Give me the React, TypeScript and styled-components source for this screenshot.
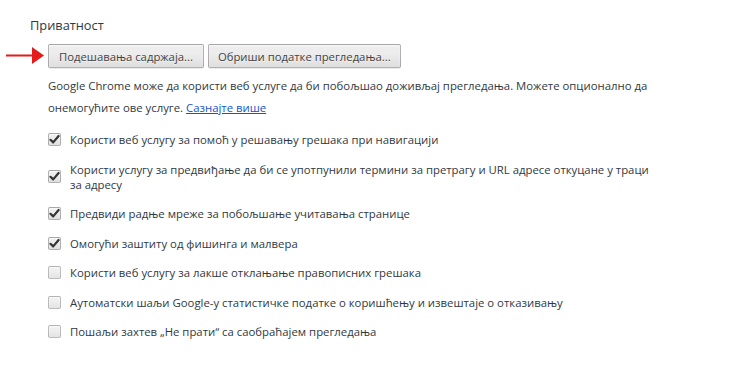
import React from "react";
import styled, { createGlobalStyle } from "styled-components";

const Global = createGlobalStyle`
  html, body { margin: 0; padding: 0; background: #fff; }
  body { font-family: "Open Sans", "Noto Sans", sans-serif; color: #303942; }
`;

const Page = styled.div`
  position: relative;
  width: 744px;
  height: 375px;
  padding: 17px 0 0 30px;
  box-sizing: border-box;
`;

const Title = styled.h3`
  margin: 0;
  font-size: 12.8px;
  font-weight: 400;
  line-height: 16px;
  color: #303942;
`;

const Section = styled.div`
  padding-left: 18px;
  margin-top: 11px;
`;

const ButtonRow = styled.div`
  position: relative;
  display: flex;
  gap: 4px;
`;

const Button = styled.button`
  height: 24px;
  padding: 0 10px;
  font-family: inherit;
  font-size: 11.3px;
  color: #444;
  background: linear-gradient(#ededed, #ededed 38%, #dedede);
  border: 1px solid rgba(0, 0, 0, 0.25);
  border-radius: 2px;
  box-shadow: 0 1px 0 rgba(0, 0, 0, 0.08), inset 0 1px 2px rgba(255, 255, 255, 0.75);
  text-shadow: 0 1px 0 #f0f0f0;

  & + & {
    padding: 0 9px;
  }
`;

const Arrow = styled.svg`
  position: absolute;
  left: -42px;
  top: 3px;
`;

const Description = styled.p`
  margin: 7px 0 0;
  font-size: 11.35px;
  line-height: 21.5px;
  white-space: nowrap;
`;

const Link = styled.a`
  color: #15c;
  text-decoration: underline;
`;

const List = styled.div`
  margin-top: 14px;
  display: flex;
  flex-direction: column;
  gap: 14.5px;
`;

const Row = styled.label`
  display: flex;
  align-items: center;
  gap: 9px;
  font-size: 11.35px;
  line-height: 15px;
`;

const Box = styled.span<{ $checked: boolean }>`
  flex: none;
  width: 13px;
  height: 13px;
  box-sizing: border-box;
  border: 1px solid rgba(0, 0, 0, 0.25);
  border-radius: 2px;
  background: linear-gradient(#ededed, #ededed 38%, #dedede);
  box-shadow: inset 0 1px 2px rgba(255, 255, 255, 0.75);
  display: flex;
  align-items: center;
  justify-content: center;
  opacity: ${(p) => (p.$checked ? 1 : 0.85)};
`;

const Label = styled.span`
  width: 580px;
`;

const Check = () => (
  <svg width="11" height="11" viewBox="0 0 11 11">
    <path d="M1.5 5.8 L4.2 8.4 L9.6 2" fill="none" stroke="#333" strokeWidth="2.2" strokeLinecap="round" strokeLinejoin="round" />
  </svg>
);

const items: [string, boolean][] = [
  ["Користи веб услугу за помоћ у решавању грешака при навигацији", true],
  ["Користи услугу за предвиђање да би се употпунили термини за претрагу и URL адресе откуцане у траци за адресу", true],
  ["Предвиди радње мреже за побољшање учитавања странице", true],
  ["Омогући заштиту од фишинга и малвера", true],
  ["Користи веб услугу за лакше отклањање правописних грешака", false],
  ["Аутоматски шаљи Google-у статистичке податке о коришћењу и извештаје о отказивању", false],
  ["Пошаљи захтев „Не прати“ са саобраћајем прегледања", false],
];

export default function App() {
  return (
    <>
      <Global />
      <Page>
        <Title>Приватност</Title>
        <Section>
          <ButtonRow>
            <Arrow width="38" height="18" viewBox="0 0 38 18">
              <rect x="0" y="7.5" width="27" height="2" fill="#e31b1b" />
              <polygon points="26,0 38,8.5 26,17" fill="#e31b1b" />
            </Arrow>
            <Button>Подешавања садржаја...</Button>
            <Button>Обриши податке прегледања...</Button>
          </ButtonRow>
          <Description>
            Google Chrome може да користи веб услуге да би побољшао доживљај прегледања. Можете опционално да
            <br />
            онемогућите ове услуге. <Link href="#">Сазнајте више</Link>
          </Description>
          <List>
            {items.map(([t, c]) => (
              <Row key={t}>
                <Box $checked={c}>{c && <Check />}</Box>
                <Label>{t}</Label>
              </Row>
            ))}
          </List>
        </Section>
      </Page>
    </>
  );
}
